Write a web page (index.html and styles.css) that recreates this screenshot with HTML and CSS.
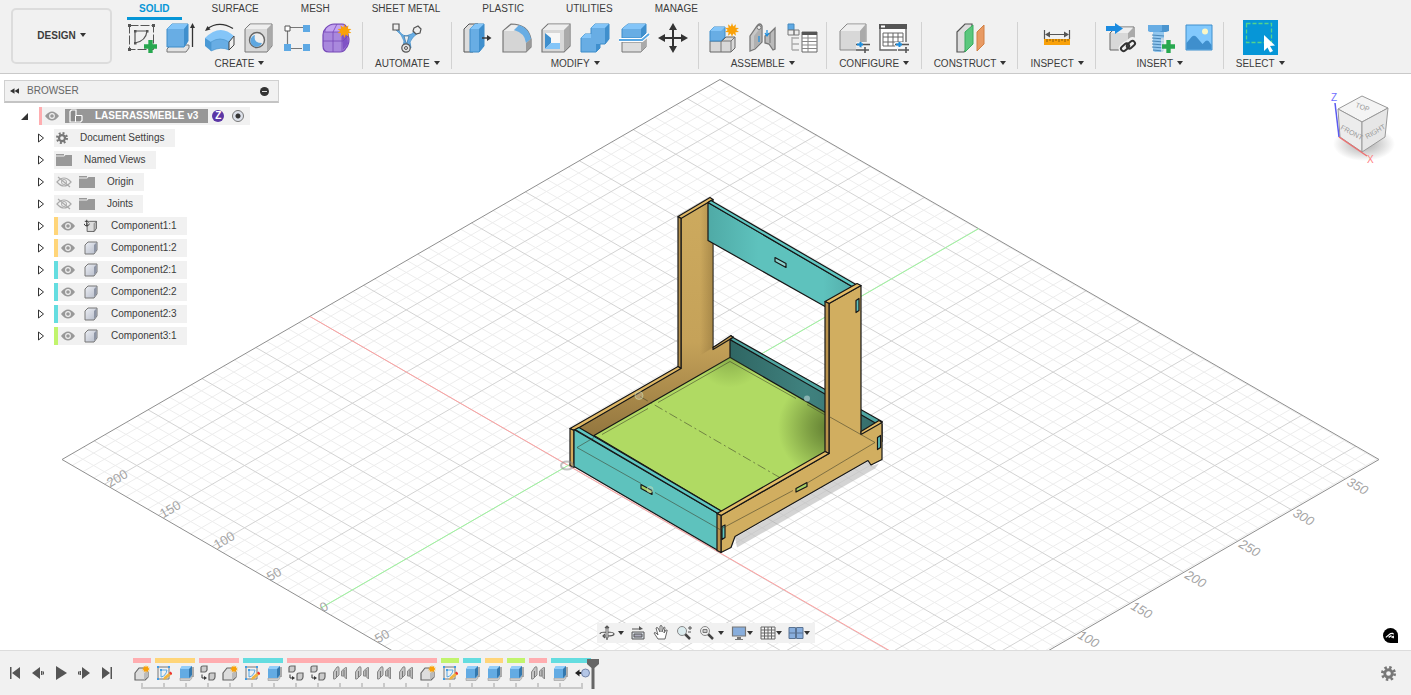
FILE: index.html
```html
<!DOCTYPE html>
<html lang="en">
<head>
<meta charset="utf-8">
<title>LASERASSMEBLE v3</title>
<link rel="stylesheet" href="styles.css">
</head>
<body>
<svg class="defs" aria-hidden="true">
  <defs>
    <linearGradient id="gTan" x1="0" y1="0" x2="0" y2="1"><stop offset="0" stop-color="#cdaa5e"/><stop offset=".6" stop-color="#c5a259"/><stop offset="1" stop-color="#92753e"/></linearGradient>
    <linearGradient id="gPost" x1="0" y1="0" x2="1" y2="0"><stop offset=".6" stop-color="#8a6e38" stop-opacity="0"/><stop offset="1" stop-color="#8a6e38" stop-opacity=".5"/></linearGradient>
    <linearGradient id="gBeam" x1="0" y1="0" x2="1" y2="0"><stop offset="0" stop-color="#4faaa6"/><stop offset=".35" stop-color="#5ec2bd"/><stop offset=".8" stop-color="#5ec2bd"/><stop offset="1" stop-color="#54aeab"/></linearGradient>
    <linearGradient id="gBack" x1="0" y1="0" x2="1" y2="0"><stop offset="0" stop-color="#2f6663"/><stop offset=".5" stop-color="#40827f"/><stop offset="1" stop-color="#356c69"/></linearGradient>
    <radialGradient id="gShade" gradientUnits="userSpaceOnUse" cx="830" cy="428" r="52"><stop offset="0" stop-color="#4c6524" stop-opacity=".8"/><stop offset=".4" stop-color="#4c6524" stop-opacity=".5"/><stop offset="1" stop-color="#4c6524" stop-opacity="0"/></radialGradient>
    <radialGradient id="gCorner" gradientUnits="userSpaceOnUse" cx="730" cy="352" r="36"><stop offset="0" stop-color="#5f8030" stop-opacity=".55"/><stop offset="1" stop-color="#5f8030" stop-opacity="0"/></radialGradient>
    <radialGradient id="gCubeShade"><stop offset=".3" stop-color="#777" stop-opacity=".45"/><stop offset="1" stop-color="#777" stop-opacity="0"/></radialGradient>
    <linearGradient id="gSmall" x1="0" y1="0" x2="1" y2="1"><stop offset="0" stop-color="#eef0f5"/><stop offset="1" stop-color="#b4bac8"/></linearGradient>
  </defs>
  <symbol id="plus" viewBox="0 0 12 12"><path d="M4 0h4v4h4v4H8v4H4V8H0V4h4z" fill="#27a84f"/></symbol>
  <symbol id="spark" viewBox="0 0 14 14"><path d="M7 0l1.200 3.600L11 1.300l-.6 3.400L14 5l-2.800 2 2.800 2-3.600.3.600 3.400-2.800-2.300L7 14l-1.200-3.600L3 12.700l.6-3.400L0 9l2.800-2L0 5l3.600-.3L3 1.300l2.800 2.300z" fill="#f9a109"/></symbol>

  <symbol id="sketch" viewBox="0 0 30 30"><path d="M2.500 2.500h24v24h-24z" fill="none" stroke="#555" stroke-dasharray="9 2"/><g fill="#555"><path d="M1 1h3v3H1zM25 1h3v3h-3zM1 25h3v3H1zM7 7h2.500v2.500H7zM19 7h2.500v2.500H19zM7 19h2.500v2.500H7z"/></g><path d="M8 8h12q-1 10-12 12z" fill="none" stroke="#555" stroke-width="1.200"/><use href="#plus" x="17" y="17" width="13" height="13"/></symbol>
  <symbol id="extrude" viewBox="0 0 30 30"><path d="M1 26l4-4h18v3l-3 4H1z" fill="#e3e3e3" stroke="#777"/><path d="M1 6l5-5h16v17l-4 6H1z" fill="#68ade4" stroke="#3d8cc9"/><path d="M1 6l5-5h16l-4 5z" fill="#84c5f8"/><path d="M18 6l4-5v17l-4 6z" fill="#3f8fcd"/><path d="M26.500 4v20" stroke="#333" stroke-width="1.300"/><path d="M24 5l2.500-5L29 5z" fill="#333"/></symbol>
  <symbol id="revolve" viewBox="0 0 30 30"><path d="M2 6q12-9 26-.5" fill="none" stroke="#333" stroke-width="1.300"/><path d="M0 8l2.500-5 3 3.500z" fill="#333"/><path d="M0 15q15-15 29-2l-5 7q-8-6-18 3z" fill="#84c5f8"/><path d="M0 15l6 4v9l-6-5z" fill="#4a99d5"/><path d="M6 19q9-6 18 0v8q-8-4-18 1z" fill="#68ade4" stroke="#4c97cf" stroke-width=".7"/><path d="M24 19l5-6v9l-5 5z" fill="#eee" stroke="#444"/></symbol>
  <symbol id="hole" viewBox="0 0 30 30"><path d="M1 6l5-5h22v22l-5 6H1z" fill="#d8d8d8" stroke="#777"/><path d="M1.500 6l5-4.500h21L23 6z" fill="#eee"/><path d="M23 6l4.500-4.500V23L23 28.500z" fill="#aaa"/><circle cx="13" cy="17" r="7.500" fill="#eee" stroke="#666" stroke-width="1.400"/><path d="M11 12a6 6 0 1 0 7 8q-9 0-7-8z" fill="#5ea7e0"/></symbol>
  <symbol id="pattern" viewBox="0 0 30 30"><path d="M7 4.500h13M4.500 8v13M8 25.500h11" stroke="#777" stroke-width="1.200"/><path d="M2 3h5v5H2z" fill="#fff" stroke="#555"/><path d="M20 2h7v7h-7zM1 21h7v7H1zM20 21h7v7h-7z" fill="#5ea9e4"/></symbol>
  <symbol id="form" viewBox="0 0 30 30"><path d="M1 12q0-4 3-7 4-4 8-4h8q4 0 5 5l2 10q0 6-3 9-2 4-6 4H7q-6 0-6-6z" fill="#a988dd" stroke="#7648b8" stroke-width="1.200"/><path d="M4 6q3-4 8-4h8q2 0 3 3l-4 4H4z" fill="#c4a4f0"/><path d="M20 9l5-4 1 16-5 6z" fill="#8052c6"/><path d="M1 18h20l5-5M11 29V9l4-8M2 9h18v19M20 9l5-5" fill="none" stroke="#7648b8" stroke-width=".8"/><use href="#spark" x="15.500" y="1" width="14" height="14"/></symbol>

  <symbol id="automate" viewBox="0 0 30 30"><path d="M6 5q2 7 8 8 6-1 10-6l2 3q-6 4-8 9l1 6h-8l1-7q-2-7-8-11z" fill="#68ade4" stroke="#3d8cc9" stroke-width=".8"/><path d="M12 13h5l-2 7h-1z" fill="#eee" stroke="#3d77a5" stroke-width=".8"/><path d="M1 1h6v6H1zM22 5l4-2 3 3-1 4-4 1-3-3z" fill="#eee" stroke="#555" stroke-width="1.200"/><circle cx="14" cy="25" r="4.200" fill="#e5e5e5" stroke="#555" stroke-width="1.200"/><circle cx="14" cy="25" r="1.500" fill="none" stroke="#555"/></symbol>

  <symbol id="presspull" viewBox="0 0 30 30"><path d="M1 6l5-5h9v22l-5 6H1z" fill="#ddd" stroke="#555"/><path d="M7 6l5-5h9v22l-5 6H7z" fill="#68ade4" stroke="#3d8cc9"/><path d="M7 6l5-5h9l-5 5z" fill="#84c5f8"/><path d="M16 6l5-5v22l-5 6z" fill="#3f8fcd"/><path d="M19 15h6" stroke="#333" stroke-width="1.400"/><path d="M24 12l4.500 3-4.500 3z" fill="#333"/></symbol>
  <symbol id="fillet" viewBox="0 0 30 30"><path d="M1 8l8-7q17 0 20 15v8l-5 5H1z" fill="#d5d5d5" stroke="#777" stroke-width="1.200"/><path d="M1.500 8l8-6q5 0 7 1l-5 5z" fill="#eee"/><path d="M12 7l5-5q10 3 12 14l-5 4Q23 10 12 7z" fill="#68ade4"/><path d="M24 20l5-4v8l-5 5z" fill="#999"/></symbol>
  <symbol id="shell" viewBox="0 0 30 30"><path d="M1 7l6-6h22v22l-6 6H1z" fill="#d8d8d8" stroke="#777" stroke-width="1.200"/><path d="M1.500 7l6-5.500h21L23 7z" fill="#eee"/><path d="M23 7l5.500-5.500V23L23 28.500z" fill="#aaa"/><path d="M4 10h15v16H4z" fill="#f7f7f7"/><path d="M4 10l6 5v5l-6 6z" fill="#3f8fcd"/><path d="M4 26l6-6h9v6z" fill="#84c5f8"/></symbol>
  <symbol id="combine" viewBox="0 0 30 30"><path d="M1 15l4-4h6V5l4-4h14v15l-4 5h-5v4l-4 4H1z" fill="#68ade4" stroke="#3d8cc9"/><path d="M11 5l4-4h14l-4 4zM1 15l4-4h6v4z" fill="#84c5f8"/><path d="M25 5l4-4v15l-4 5zM16 21h4v4l-4 4z" fill="#3f8fcd"/></symbol>
  <symbol id="split" viewBox="0 0 30 30"><path d="M3 19h20l4-4v9l-5 5H3z" fill="#ddd" stroke="#777"/><path d="M22 19l5-4v9l-5 5z" fill="#aaa"/><path d="M3 6l6-5h18v9l-5 5H3z" fill="#68ade4" stroke="#3d8cc9"/><path d="M3 6l6-5h18l-5 5z" fill="#84c5f8"/><path d="M22 6l5-5v9l-5 5z" fill="#3f8fcd"/><path d="M0 17h23l7-6" fill="none" stroke="#fff" stroke-width="4"/><path d="M0 17h23l7-6" fill="none" stroke="#58a7e3" stroke-width="1.800"/></symbol>
  <symbol id="move" viewBox="0 0 30 30"><path d="M15 4v22M4 15h22" stroke="#333" stroke-width="2"/><path d="M15 0l4 7h-8zM15 30l4-7h-8zM0 15l7-4v8zM30 15l-7-4v8z" fill="#333"/></symbol>

  <symbol id="component" viewBox="0 0 30 30"><path d="M1 18h12l4-4h9v11l-4 4H1z" fill="#d8d8d8" stroke="#666"/><path d="M12 18v11M12 18h10l4-4M22 18v11" fill="none" stroke="#777"/><path d="M1 8l4-4h11v10l-4 4H1z" fill="#68ade4" stroke="#3d8cc9"/><path d="M1 8l4-4h11l-4 4z" fill="#84c5f8"/><use href="#spark" x="16" y="0" width="14" height="14"/></symbol>
  <symbol id="joint" viewBox="0 0 30 30"><path d="M2 13L9 3q3-4 5 0v16L7 26l-5 2z" fill="#c8c8c8" stroke="#777" stroke-width="1.300"/><path d="M6 13l7-9v15l-7 7z" fill="#b0b0b0"/><circle cx="11" cy="4.500" r="2" fill="#eee" stroke="#777"/><path d="M17 13l5-3 5-5v21l-2 1-4-6-4-1z" fill="#bbb" stroke="#777" stroke-width="1.300"/><path d="M22 10v10" stroke="#777"/><path d="M11 13v6M19 7v6M17 10l2 3 2-3" stroke="#1c8ede" fill="none" stroke-width="1.200"/></symbol>
  <symbol id="bom" viewBox="0 0 30 30"><path d="M1 1h6v6H1z" fill="#5ea9e4" stroke="#4689bd"/><path d="M1 7h6v5H1zM7 7h5v5H7z" fill="#eee" stroke="#777"/><path d="M5 14v13M5 15h7M5 21h7M5 27h7" fill="none" stroke="#aaa" stroke-width="1.300"/><path d="M15 9h15v20H15z" fill="#fff" stroke="#666"/><path d="M15 9h15v3H15z" fill="#555"/><path d="M15 15h15M15 18.500h15M15 22h15M15 25.500h15M21 12v17" stroke="#888"/></symbol>

  <symbol id="params" viewBox="0 0 32 30"><path d="M1 8l7-7h19v18l-7 8H1z" fill="#d8d8d8" stroke="#888"/><path d="M1.500 8l7-6.500h18L21 8z" fill="#eee"/><path d="M21 8l5.500-6.500V19L21 26z" fill="#aaa"/><path d="M17 21.500h14M17 27h14" stroke="#f1f1f1" stroke-width="5"/><path d="M17 21.500h14M17 27h13M26 24v6" stroke="#555" stroke-width="1.600"/><path d="M18 21.500h6M21.500 19v5" stroke="#1c8ede" stroke-width="2"/></symbol>
  <symbol id="table" viewBox="0 0 32 30"><path d="M2 2h26v25H2z" fill="#fff" stroke="#666" stroke-width="1.400"/><path d="M1 1h28v5H1z" fill="#555"/><path d="M3 2.500h4v2H3z" fill="#fff"/><path d="M5 10h20v13H5zM5 14h20M5 19h20M10 10v13M15 10v13M20 10v13" fill="none" stroke="#666"/><path d="M17 21.500h14M19 27h12" stroke="#f1f1f1" stroke-width="5"/><path d="M17 21.500h14M20 27h11M28 24v6" stroke="#555" stroke-width="1.600"/><path d="M18 21.500h6M21.500 19v5" stroke="#1c8ede" stroke-width="2"/></symbol>
  <symbol id="construct" viewBox="0 0 30 30"><path d="M2 9l8-8h7v20l-8 8H2z" fill="#ddd" stroke="#555" stroke-width="1.200"/><path d="M10 9l8-7v19l-8 8z" fill="#5bc77d" stroke="#38ac5e"/><path d="M22 9l7-7v19l-7 7z" fill="#e89a63" stroke="#d17f43"/></symbol>
  <symbol id="measure" viewBox="0 0 30 30"><path d="M2.500 7v9M27.500 7v9M5 11.500h20" stroke="#555" stroke-width="1.200"/><path d="M3 11.500l5-3v6zM27 11.500l-5-3v6z" fill="#555"/><path d="M2 16h26v6H2z" fill="#f9a109"/><path d="M5 16v3M8 16v2M11 16v3M14 16v2M17 16v3M20 16v2M23 16v3M26 16v2" stroke="#8b5c0d"/></symbol>
  <symbol id="derive" viewBox="0 0 30 30"><path d="M4 10l6-6h18v17l-6 6H4z" fill="#d8d8d8" stroke="#666"/><path d="M22 10l6-6v17l-6 6z" fill="#aaa"/><path d="M5 10l6-5.500h16L22 10z" fill="#eee"/><path d="M0 3h9V0l8 5.500L9 11V8H0z" fill="#1b8be0"/><g fill="none" stroke="#f1f1f1" stroke-width="5"><rect x="15" y="22" width="9" height="5" rx="2.500" transform="rotate(-40 19 25)"/><rect x="21" y="18" width="9" height="5" rx="2.500" transform="rotate(-40 25 21)"/></g><g fill="none" stroke="#333" stroke-width="2"><rect x="15" y="22" width="9" height="5" rx="2.500" transform="rotate(-40 19 25)"/><rect x="20" y="19" width="9" height="5" rx="2.500" transform="rotate(-40 25 21)"/></g></symbol>
  <symbol id="bolt" viewBox="0 0 30 30"><path d="M3 2h21v6l-3 1H6L3 8z" fill="#4b95cf"/><path d="M3 2h14v6l-3 1H6L3 8z" fill="#68ade4"/><path d="M8 9h11v19l-2 1H10l-2-1z" fill="#93c7ee"/><path d="M7 12l12 1M7 15l12 1M7 18l12 1M7 21l12 1M7 24l12 1M8 27l10 1" stroke="#4b88b8" stroke-width="1.200"/><path d="M16 15h8v15h-8z" fill="#f1f1f1" opacity=".6"/><use href="#plus" x="17" y="17" width="13" height="13"/></symbol>
  <symbol id="image" viewBox="0 0 30 30"><path d="M2 2h26v25H2z" fill="#82c9fd" stroke="#3f8fcd"/><circle cx="21" cy="8.500" r="3" fill="#fbf6c5"/><path d="M2.500 20l5-6q2.500-2.500 5 0l6 7 3-3q1.500-1 3 0l3 4v4.500h-25z" fill="#3f8fcd"/></symbol>

  <symbol id="eye" viewBox="0 0 14 10"><path d="M0 5q7-9 14 0-7 9-14 0z" fill="#999"/><circle cx="7" cy="5" r="2.900" fill="#f1f1f1"/><circle cx="7" cy="5" r="1.800" fill="#999"/></symbol>
  <symbol id="eyeoff" viewBox="0 0 16 12"><path d="M1 6q7-8 14 0-7 8-14 0z" fill="none" stroke="#aaa" stroke-width="1.200"/><circle cx="8" cy="6" r="2.500" fill="none" stroke="#aaa"/><path d="M2 1l12 10" stroke="#aaa" stroke-width="1.200"/></symbol>
  <symbol id="folder" viewBox="0 0 16 12"><path d="M0 0h8v1.500H0zM0 2.500h8L9.500 1H16v11H0z" fill="#999"/></symbol>
  <symbol id="gear" viewBox="0 0 16 16"><circle cx="8" cy="8" r="6.500" fill="none" stroke="currentColor" stroke-width="3" stroke-dasharray="2.550 2.550"/><circle cx="8" cy="8" r="4" fill="none" stroke="currentColor" stroke-width="3"/></symbol>
  <symbol id="body" viewBox="0 0 14 14"><path d="M1 4l3-3h9v8l-3 4H1z" fill="url(#gSmall)" stroke="#777" stroke-linejoin="round"/><path d="M10 4l2.500-2.500V9L10 12z" fill="#8e95a5"/></symbol>
  <symbol id="grounded" viewBox="0 0 18 18"><path d="M4 6l3-3h9v9l-3 4H4z" fill="#ddd" stroke="#444"/><path d="M13 6l3-3v9l-3 4z" fill="#bbb" stroke="#555" stroke-width=".7"/><path d="M3.500 1v8M1 3h5M0 6q1 3 3.500 3T7 6" fill="none" stroke="#333" stroke-width="1.200"/></symbol>
  <symbol id="assembly" viewBox="0 0 16 14"><path d="M2 2.500L3.500 1H8v5.500h5.500L14 7v4.500L12.500 13H2z" fill="#8a8a8a" stroke="#fff" stroke-width="1.200"/><path d="M7.500 7v6" stroke="#fff"/></symbol>

  <symbol id="t-comp" viewBox="0 0 16 16"><path d="M1 8l4-5h6l3 4v5l-3 3H1z" fill="#ddd" stroke="#666" stroke-width="1.200" stroke-linejoin="round"/><path d="M10 8l4-2v6l-4 3z" fill="#bbb"/><use href="#spark" x="8" y="0" width="8" height="8"/></symbol>
  <symbol id="t-sketch" viewBox="0 0 16 16"><path d="M2 2h11v12H2z" fill="none" stroke="#777"/><path d="M5 5h6q-1 6-6 7z" fill="none" stroke="#58a7e3"/><path d="M1 1h2v2H1zM12 1h2v2h-2zM1 13h2v2H1zM4 4h2v2H4z" fill="#429de5"/><path d="M7 15l1-3 6-5 2 2-6 5z" fill="#efb441"/><path d="M13 8l1.500-1.500 2 2L15 10z" fill="#e33"/></symbol>
  <symbol id="t-extrude" viewBox="0 0 16 16"><path d="M2 13h10l2-2v2l-2 2.500H2z" fill="#ccc" stroke="#999" stroke-width=".6"/><path d="M2 4l2-3h10v9l-2 3H2z" fill="#63abe3"/><path d="M2 4l2-3h10l-2 3z" fill="#92cefa"/><path d="M11 4l3-3v9l-3 3z" fill="#3478ae"/><path d="M15 2v10" stroke="#666"/></symbol>
  <symbol id="t-built" viewBox="0 0 16 16"><path d="M1 2.500Q1 1 3 1h4v4Q6 7 5 7H1zM9 10q0-2 2-2h4v4q0 2-2 3H9z" fill="#ccc" stroke="#666" stroke-width="1.200"/><path d="M2 9.500V13h3" fill="none" stroke="#333"/><path d="M4 11l3 2-3 2z" fill="#333"/></symbol>
  <symbol id="t-joint" viewBox="0 0 16 16"><path d="M1.500 7L5 2q2-1 2 1v7l-4 4H1.500z" fill="#c4c4c4" stroke="#888"/><path d="M9.500 6l4-3.500h1V14l-3-3h-2z" fill="#bbb" stroke="#888"/><path d="M4.500 6v6M12 5v6" stroke="#777"/></symbol>
  <symbol id="t-capture" viewBox="0 0 16 16"><path d="M4 8h5" stroke="#222" stroke-width="2"/><path d="M1 8l4.500-3.500v7z" fill="#222"/><circle cx="11.500" cy="8" r="4" fill="#b4c6e6" stroke="#7585a8"/></symbol>
</svg>

<div class="app">
  <header class="toolbar">
    <button class="workspace">DESIGN<i class="caret"></i></button>
    <div class="ribbon">
      <nav class="tabs">
        <button class="tab active">SOLID</button><button class="tab">SURFACE</button><button class="tab">MESH</button><button class="tab">SHEET METAL</button><button class="tab">PLASTIC</button><button class="tab">UTILITIES</button><button class="tab">MANAGE</button>
      </nav>
      <div class="groups">
        <section class="group wide">
          <div class="tools"><button aria-label="Create sketch"><svg><use href="#sketch"/></svg></button><button aria-label="Extrude"><svg><use href="#extrude"/></svg></button><button aria-label="Revolve"><svg><use href="#revolve"/></svg></button><button aria-label="Hole"><svg><use href="#hole"/></svg></button><button aria-label="Pattern"><svg><use href="#pattern"/></svg></button><button aria-label="Create form"><svg><use href="#form"/></svg></button></div>
          <button class="menu">CREATE<i class="caret"></i></button>
        </section>
        <section class="group">
          <div class="tools"><button aria-label="Automated modeling"><svg><use href="#automate"/></svg></button></div>
          <button class="menu">AUTOMATE<i class="caret"></i></button>
        </section>
        <section class="group wide">
          <div class="tools"><button aria-label="Press pull"><svg><use href="#presspull"/></svg></button><button aria-label="Fillet"><svg><use href="#fillet"/></svg></button><button aria-label="Shell"><svg><use href="#shell"/></svg></button><button aria-label="Combine"><svg><use href="#combine"/></svg></button><button aria-label="Split body"><svg><use href="#split"/></svg></button><button aria-label="Move"><svg><use href="#move"/></svg></button></div>
          <button class="menu">MODIFY<i class="caret"></i></button>
        </section>
        <section class="group mid">
          <div class="tools"><button aria-label="New component"><svg><use href="#component"/></svg></button><button aria-label="Joint"><svg><use href="#joint"/></svg></button><button aria-label="Bill of materials"><svg><use href="#bom"/></svg></button></div>
          <button class="menu">ASSEMBLE<i class="caret"></i></button>
        </section>
        <section class="group">
          <div class="tools"><button aria-label="Change parameters"><svg><use href="#params"/></svg></button><button aria-label="Configuration table"><svg><use href="#table"/></svg></button></div>
          <button class="menu">CONFIGURE<i class="caret"></i></button>
        </section>
        <section class="group">
          <div class="tools"><button aria-label="Offset plane"><svg><use href="#construct"/></svg></button></div>
          <button class="menu">CONSTRUCT<i class="caret"></i></button>
        </section>
        <section class="group">
          <div class="tools"><button aria-label="Measure"><svg><use href="#measure"/></svg></button></div>
          <button class="menu">INSPECT<i class="caret"></i></button>
        </section>
        <section class="group mid">
          <div class="tools"><button aria-label="Insert derive"><svg><use href="#derive"/></svg></button><button aria-label="Insert fastener"><svg><use href="#bolt"/></svg></button><button aria-label="Insert canvas"><svg><use href="#image"/></svg></button></div>
          <button class="menu">INSERT<i class="caret"></i></button>
        </section>
        <section class="group">
          <div class="tools"><button class="selected" aria-label="Select"><svg viewBox="0 0 35 35"><path d="M3.500 3.500h25v19h-25z" fill="none" stroke="#54d38c" stroke-width="1.300" stroke-dasharray="4 2"/><path d="M21 15l11 10.500-5 .5 3 5-3 1.500-2.500-5L21 31z" fill="#fff"/></svg></button></div>
          <button class="menu">SELECT<i class="caret"></i></button>
        </section>
      </div>
    </div>
  </header>

  <main class="viewport">
    <svg class="scene" viewBox="0 74 1411 577" preserveAspectRatio="xMidYMid slice" role="img" aria-label="Laser cut assembly on the ground grid">
      <path id="minor" class="minor"/>
      <path id="major" class="major"/>
      <path class="border" d="M62 460L720 80 1379 460 720 841z"/>
      <path class="axis-x" d="M310 317L898 656"/>
      <path class="axis-y" d="M320 609L979 229"/>
      <g class="scale">
        <text transform="translate(110 488) rotate(-30)">200</text>
        <text transform="translate(163 519) rotate(-30)">150</text>
        <text transform="translate(217 550) rotate(-30)">100</text>
        <text transform="translate(270 582) rotate(-30)">50</text>
        <text transform="translate(323 613) rotate(-30)">0</text>
        <text transform="translate(378 644) rotate(-30)">50</text>
      </g>
      <g class="scale lean">
        <text transform="translate(1346 485) rotate(30)">350</text>
        <text transform="translate(1292 516) rotate(30)">300</text>
        <text transform="translate(1238 547) rotate(30)">250</text>
        <text transform="translate(1184 578) rotate(30)">200</text>
        <text transform="translate(1130 609) rotate(30)">150</text>
        <text transform="translate(1077 638) rotate(30)">100</text>
      </g>

      <path d="M735 538L868 462l5 4 6-2-4 5-138 79z" fill="#aaa" opacity=".5"/>
      <g class="model">
        <path d="M681 218L713 200V348L733 337 731 360 594 438 575 430 681 368z" fill="url(#gTan)"/>
        <path class="bare" d="M681 218L713 200V348L681 368z" fill="url(#gPost)"/>
        <path d="M678 217L710 198 713 200 681 219z" fill="#e0b865"/>
        <path d="M678 217L681 219V369L678 367z" fill="#b7924d"/>
        <path d="M713 348L731 336 733 338 713 350z" fill="#c39d54"/>
        <path d="M570 429L678 367 681 369 574 431z" fill="#e0b865"/>
        <path d="M570 429L574 431V468L570 466z" fill="#d2ab5c"/>
        <path d="M730 340L882 425V442L861 436 730 360z" fill="url(#gBack)"/>
        <path d="M730 340L733 338 882 422 878 425z" fill="#4fa6a2"/>
        <path d="M594 436L730 358 860 433 722 512z" fill="#b0da63"/>
        <path class="bare" d="M594 436L730 358 860 433 722 512z" fill="url(#gShade)"/>
        <path class="bare" d="M594 436L730 358 860 433 722 512z" fill="url(#gCorner)"/>
        <path class="hidden" d="M602 435L648 409M658 403L730 362 796 399M807 405L826 416"/>
        <path class="hidden" d="M640 397L797 488" stroke-dasharray="9 3 2 3"/>
        <circle cx="639" cy="396" r="4" class="pin"/>
        <path d="M708 203L852 287 825 307 708 241z" fill="url(#gBeam)"/>
        <path d="M708 203L711 201 856 285 852 287z" fill="#5fc7c2"/>
        <path d="M775 258L786 264V268L775 262z" fill="#8cd3ce"/>
        <path d="M574 430L718 514V551L574 467z" fill="#5ec2bd"/>
        <path d="M575 430L579 428 722 512 718 514z" fill="#5fc7c2"/>
        <path d="M641 485L652 491V495L641 489z" fill="#a6cf64"/>
        <path d="M829 304L861 286V434L882 422V460L871 465.500 868 461 735 537 731 548 721 553V516L829 454z" fill="#d1ae60"/>
        <path d="M825 302L857 284 861 286 829 304z" fill="#e5bc67"/>
        <path d="M825 302L829 304V454L825 452z" fill="#ba934d"/>
        <path d="M717 514L825 452 829 454 721 516z" fill="#e5bc67"/>
        <path d="M717 514L721 516V553L717 551z" fill="#ba934d"/>
        <path d="M861 432L879 421 882 423 861 435z" fill="#e5bc67"/>
        <path d="M856 301L859 299V311L856 313zM877.500 438L880.500 436V448L877.500 450zM722 527L725 525.500V538L722 540z" fill="#5ec2bd"/>
        <path d="M796 489L807 483V487L796 492.500z" fill="#a6cf64"/>
        <path class="hidden" d="M594 438L577 448 641 484M655 493L720 530 793 491M808 483L875 443 829 417"/>
        <circle cx="650" cy="490" r="3" class="pin"/>
        <circle cx="807" cy="399" r="3" class="dot"/>
        <ellipse cx="567" cy="466" rx="6" ry="4" class="origin"/>
      </g>
    </svg>

    <aside class="browser">
      <div class="browser-head"><button class="collapse" aria-label="Collapse"><svg viewBox="0 0 10 6"><path d="M5 0v6L0 3zM10 0v6L5 3z" fill="#333"/></svg></button><span>BROWSER</span><button class="minus" aria-label="Minimize"></button></div>
      <ul class="tree">
        <li class="root"><button class="twist" aria-label="Collapse tree"><svg viewBox="0 0 8 8"><path d="M8 0v8H0z" fill="#333"/></svg></button>
          <div class="row pink"><svg class="eye"><use href="#eye"/></svg><span class="name"><svg class="asm"><use href="#assembly"/></svg>LASERASSMEBLE v3</span><span class="badge">Z</span><input type="radio" checked aria-label="Activate LASERASSMEBLE v3"></div></li>
        <li><button class="twist" aria-label="Expand"><svg viewBox="0 0 8 10"><path d="M1.500 1v8L6.500 5z" fill="#fff" stroke="#333"/></svg></button><div class="row"><svg class="gear"><use href="#gear"/></svg><span class="gap-s">Document Settings</span></div></li>
        <li><button class="twist" aria-label="Expand"><svg viewBox="0 0 8 10"><path d="M1.500 1v8L6.500 5z" fill="#fff" stroke="#333"/></svg></button><div class="row"><svg class="folder"><use href="#folder"/></svg><span class="gap-s">Named Views</span></div></li>
        <li><button class="twist" aria-label="Expand"><svg viewBox="0 0 8 10"><path d="M1.500 1v8L6.500 5z" fill="#fff" stroke="#333"/></svg></button><div class="row"><svg class="off"><use href="#eyeoff"/></svg><svg class="folder"><use href="#folder"/></svg><span class="gap-s">Origin</span></div></li>
        <li><button class="twist" aria-label="Expand"><svg viewBox="0 0 8 10"><path d="M1.500 1v8L6.500 5z" fill="#fff" stroke="#333"/></svg></button><div class="row"><svg class="off"><use href="#eyeoff"/></svg><svg class="folder"><use href="#folder"/></svg><span class="gap-s">Joints</span></div></li>
        <li><button class="twist" aria-label="Expand"><svg viewBox="0 0 8 10"><path d="M1.500 1v8L6.500 5z" fill="#fff" stroke="#333"/></svg></button><div class="row yellow"><svg class="eye"><use href="#eye"/></svg><svg class="part"><use href="#grounded"/></svg><span>Component1:1</span></div></li>
        <li><button class="twist" aria-label="Expand"><svg viewBox="0 0 8 10"><path d="M1.500 1v8L6.500 5z" fill="#fff" stroke="#333"/></svg></button><div class="row yellow"><svg class="eye"><use href="#eye"/></svg><svg class="part"><use href="#body"/></svg><span>Component1:2</span></div></li>
        <li><button class="twist" aria-label="Expand"><svg viewBox="0 0 8 10"><path d="M1.500 1v8L6.500 5z" fill="#fff" stroke="#333"/></svg></button><div class="row teal"><svg class="eye"><use href="#eye"/></svg><svg class="part"><use href="#body"/></svg><span>Component2:1</span></div></li>
        <li><button class="twist" aria-label="Expand"><svg viewBox="0 0 8 10"><path d="M1.500 1v8L6.500 5z" fill="#fff" stroke="#333"/></svg></button><div class="row teal"><svg class="eye"><use href="#eye"/></svg><svg class="part"><use href="#body"/></svg><span>Component2:2</span></div></li>
        <li><button class="twist" aria-label="Expand"><svg viewBox="0 0 8 10"><path d="M1.500 1v8L6.500 5z" fill="#fff" stroke="#333"/></svg></button><div class="row teal"><svg class="eye"><use href="#eye"/></svg><svg class="part"><use href="#body"/></svg><span>Component2:3</span></div></li>
        <li><button class="twist" aria-label="Expand"><svg viewBox="0 0 8 10"><path d="M1.500 1v8L6.500 5z" fill="#fff" stroke="#333"/></svg></button><div class="row lime"><svg class="eye"><use href="#eye"/></svg><svg class="part"><use href="#body"/></svg><span>Component3:1</span></div></li>
      </ul>
    </aside>

    <svg class="cube" viewBox="1320 86 80 84" role="img" aria-label="View cube">
      <ellipse cx="1364" cy="144" rx="31" ry="17" fill="url(#gCubeShade)"/>
      <g stroke="#999" stroke-linejoin="round"><path d="M1338 109L1362 96 1388 108 1362 122z" fill="#f4f4f4"/><path d="M1338 109L1362 122V152L1340 137z" fill="#ececec"/><path d="M1362 122L1388 108 1385 137 1362 152z" fill="#e6e6e6"/></g>
      <path d="M1335 103L1339 137" stroke="#5a5af0" stroke-width="1.500"/><path d="M1339 137L1367 156" stroke="#ee7070" stroke-width="1.500"/>
      <text x="1331" y="101" fill="#7070ff" class="axis">Z</text><text x="1367" y="163" fill="#ff8080" class="axis">X</text>
      <text class="face" transform="translate(1355 107) rotate(20)">TOP</text><text class="face" transform="translate(1340 129) rotate(28)">FRONT</text><text class="face" transform="translate(1367 139) rotate(-30)">RIGHT</text>
    </svg>

    <div class="navbar">
      <button aria-label="Orbit"><svg viewBox="0 0 16 16"><path d="M8 1v14M6 3l2-2 2 2M1 9q0-2 7-2t7 2-7 2q-3 0-4 0M6 9l-2 2 2 2" fill="none" stroke="#555" stroke-width="1.200"/><path d="M7 3h2v10H7z" fill="#ddd" stroke="#555" stroke-width=".8"/></svg><i class="caret"></i></button>
      <button aria-label="Look at"><svg viewBox="0 0 16 16"><path d="M2 7h12v7H2z" fill="#d6dce4" stroke="#555"/><path d="M4 9h8v3H4zM2 4h9" stroke="#555" fill="#aab"/><path d="M9 1l4 3-4 1z" fill="#555"/></svg></button>
      <button aria-label="Pan"><svg viewBox="0 0 16 16"><path d="M5 14L1 8q0-1 2 0l2 2-2-7q1-1 2 0l2 4V1q1-1 2 0l0 6 2-5q1 0 1 1l-1 5 2-3q2 0 1 1l-2 8z" fill="#fff" stroke="#666" stroke-linejoin="round"/></svg></button>
      <button aria-label="Zoom"><svg viewBox="0 0 16 16"><path d="M9 9l5 5" stroke="#444" stroke-width="2.500"/><circle cx="6" cy="6" r="4.500" fill="#dcecef" stroke="#888"/><path d="M12 3h4M14 1v4M12 7h3" stroke="#555"/></svg></button>
      <button aria-label="Fit"><svg viewBox="0 0 16 16"><path d="M9 9l5 5" stroke="#444" stroke-width="2.500"/><circle cx="6" cy="6" r="4.500" fill="#eee" stroke="#888"/><path d="M4 4.500h4v3H4z" fill="#ccc" stroke="#777"/></svg><i class="caret"></i></button>
      <button aria-label="Display settings"><svg viewBox="0 0 16 16"><path d="M1.500 2h13v9h-13z" fill="#88aedd" stroke="#777" stroke-width="1.200"/><path d="M6 12h4v2h2v1H4v-1h2z" fill="#777"/></svg><i class="caret tight"></i></button>
      <button aria-label="Grid and snaps"><svg viewBox="0 0 16 16"><path d="M1 2h14v12H1zM1 5h14M1 8h14M1 11h14M4.500 2v12M8 2v12M11.500 2v12" fill="#f4f4f4" stroke="#666"/></svg><i class="caret tight"></i></button>
      <button aria-label="Viewports"><svg viewBox="0 0 16 16"><path d="M1 2.500h6.500v11H1zM8.500 2.500H15v11H8.500z" fill="#88aedd" stroke="#5a7392"/><path d="M1 8h14" stroke="#5a7392"/></svg><i class="caret tight"></i></button>
    </div>
    <button class="assistant" aria-label="Assistant"><svg viewBox="0 0 16 16"><path d="M8 0a8 8 0 0 1 8 8v8H8A8 8 0 0 1 8 0z" fill="#000"/><path d="M3 10l5-4q3-1 3 1M6 10l3-2M9 10l2-1v2" fill="none" stroke="#fff" stroke-width="1.300"/></svg></button>
  </main>

  <footer class="timeline">
    <div class="playback">
      <button aria-label="Go to start"><svg viewBox="0 0 12 12"><path d="M1 0h1.500v12H1zM11 0v12L3 6z"/></svg></button>
      <button aria-label="Step back"><svg viewBox="0 0 12 12"><path d="M8 0v12L0 6zM9 4h1.500v4H9zM11 4.500h1v3h-1z"/></svg></button>
      <button aria-label="Play"><svg viewBox="0 0 12 12"><path d="M1 -1l11 7-11 7z"/></svg></button>
      <button aria-label="Step forward"><svg viewBox="0 0 12 12"><path d="M4 0v12l8-6zM1.500 4H3v4H1.500zM0 4.500h1v3H0z"/></svg></button>
      <button aria-label="Go to end"><svg viewBox="0 0 12 12"><path d="M9.500 0H11v12H9.500zM1 0v12l8-6z"/></svg></button>
    </div>
    <div class="track">
      <ol class="features">
        <li class="pink"><button aria-label="Component"><svg><use href="#t-comp"/></svg></button></li>
        <li class="yellow"><button aria-label="Sketch"><svg><use href="#t-sketch"/></svg></button><button aria-label="Extrude"><svg><use href="#t-extrude"/></svg></button></li>
        <li class="pink"><button aria-label="As-built"><svg><use href="#t-built"/></svg></button><button aria-label="Component"><svg><use href="#t-comp"/></svg></button></li>
        <li class="teal"><button aria-label="Sketch"><svg><use href="#t-sketch"/></svg></button><button aria-label="Extrude"><svg><use href="#t-extrude"/></svg></button></li>
        <li class="pink"><button aria-label="As-built"><svg><use href="#t-built"/></svg></button><button aria-label="As-built"><svg><use href="#t-built"/></svg></button><button aria-label="Joint"><svg><use href="#t-joint"/></svg></button><button aria-label="Joint"><svg><use href="#t-joint"/></svg></button><button aria-label="Joint"><svg><use href="#t-joint"/></svg></button><button aria-label="Joint"><svg><use href="#t-joint"/></svg></button><button aria-label="Component"><svg><use href="#t-comp"/></svg></button></li>
        <li class="lime"><button aria-label="Sketch"><svg><use href="#t-sketch"/></svg></button></li>
        <li class="teal"><button aria-label="Extrude"><svg><use href="#t-extrude"/></svg></button></li>
        <li class="yellow"><button aria-label="Extrude"><svg><use href="#t-extrude"/></svg></button></li>
        <li class="lime"><button aria-label="Extrude"><svg><use href="#t-extrude"/></svg></button></li>
        <li class="pink"><button aria-label="Joint"><svg><use href="#t-joint"/></svg></button></li>
        <li class="teal"><button aria-label="Extrude"><svg><use href="#t-extrude"/></svg></button><button aria-label="Capture"><svg><use href="#t-capture"/></svg></button></li>
      </ol>
      <div class="ruler"></div>
      <svg class="marker" viewBox="0 0 12 30"><path d="M0 0h12v5L7.500 9v21h-3V9L0 5z" fill="#666"/></svg>
    </div>
    <button class="settings" aria-label="Timeline settings"><svg><use href="#gear"/></svg></button>
  </footer>
</div>
<script src="grid.js"></script>
</body>
</html>
```
FILE: styles.css
```css
* { box-sizing: border-box; }
body { margin: 0; font: 10px/14px "Liberation Sans", Arial, sans-serif; color: #3c3c3c; background: #fff; }
button { font: inherit; color: inherit; background: none; border: 0; padding: 0; margin: 0; }
svg { display: block; }
ul, ol { list-style: none; margin: 0; padding: 0; }
.defs { position: absolute; width: 0; height: 0; }
.app { display: flex; flex-direction: column; height: 100vh; min-height: 480px; }
.caret { display: inline-block; margin-left: 4px; vertical-align: 2px; border: 3px solid transparent; border-top: 4px solid #333; border-bottom: 0; }

.toolbar { display: flex; background: #f1f1f1; border-bottom: 1px solid #c9c9c9; padding-left: 11px; }
.workspace { width: 101px; height: 56px; margin-top: 8px; flex: none; border: 2px solid #dcdcdc; border-radius: 5px; font-weight: bold; }
.ribbon { flex: 1; }
.tabs { display: flex; gap: 18px; padding: 0 0 0 15px; }
.tab { padding: 2px 12px 1px; border-bottom: 3px solid transparent; }
.tab.active { color: #0696d7; font-weight: bold; border-color: #0696d7; }
.groups { display: flex; padding-left: 4px; }
.group { display: flex; flex-direction: column; align-items: center; padding: 0 12px; height: 53px; position: relative; }
.group:not(:last-child)::after { content: ""; position: absolute; right: 0; top: 2px; bottom: 4px; width: 1px; background: #d2d2d2; }
.group.wide { padding: 0 10px; }
.group.mid { padding: 0 9px; }
.tools { display: flex; align-items: center; justify-content: center; gap: 7px; height: 35px; }
.tools button { width: 32px; height: 30px; }
.tools svg { width: 32px; height: 30px; }
.tools .selected { width: 35px; height: 35px; background: #0696d7; }
.tools .selected svg { width: 35px; height: 35px; }
.menu { white-space: nowrap; padding-top: 2px; }

.viewport { position: relative; flex: 1; min-height: 0; overflow: hidden; }
.scene { width: 100%; height: 100%; }
.scene path { vector-effect: non-scaling-stroke; }
.minor { fill: none; stroke: #ededed; }
.major { fill: none; stroke: #d3d3d3; }
.border { fill: none; stroke: #8f8f8f; }
.axis-x { stroke: #ffa0a0; }
.axis-y { stroke: #9df79d; }
.scale { font-size: 13px; fill: #a4a4a4; }
.lean { font-style: italic; }
.model path { stroke: #161616; stroke-width: 1.200px; stroke-linejoin: round; }
.model .bare { stroke: none; }
.model .hidden { fill: none; stroke: #3c3c28; stroke-opacity: .55; stroke-width: 1px; }
.pin { fill: #fff; fill-opacity: .2; stroke: #c8d8a8; stroke-opacity: .6; }
.dot { fill: #a8c8c8; fill-opacity: .7; }
.origin { fill: none; stroke: #888; stroke-opacity: .5; stroke-width: 2px; }

.browser { position: absolute; left: 4px; top: 6px; width: 275px; }
.browser-head { display: flex; align-items: center; gap: 8px; height: 23px; padding: 0 9px 0 5px; background: #f1f1f1; border: 1px solid #d0d0d0; border-bottom: 2px solid #c4c4c4; color: #666; }
.collapse svg { width: 9px; height: 6px; }
.minus { margin-left: auto; width: 9px; height: 9px; border-radius: 50%; background: linear-gradient(#ddd, #ddd) center / 5px 1px no-repeat #333; }
.tree { padding-top: 2px; }
.tree li { display: flex; align-items: center; height: 22px; padding-left: 33px; }
.tree .root { padding-left: 17px; }
.twist { width: 8px; margin-right: 9px; }
.twist svg { width: 8px; height: 10px; }
.root .twist svg { width: 7px; height: 7px; }
.row { display: flex; align-items: center; height: 18px; padding: 0 10px 0 2px; background: #f1f1f1; }
.row.pink, .row.yellow, .row.teal, .row.lime { border-left: 4px solid; }
.row.pink { border-color: #ffadb0; }
.row.yellow { border-color: #ffd579; }
.row.teal { border-color: #64dde0; }
.row.lime { border-color: #c1f46c; }
.row .eye { width: 14px; height: 10px; margin: 0 9px 0 1px; }
.row .off { width: 16px; height: 12px; margin-right: 7px; }
.row .gear { width: 12px; height: 12px; color: #777; }
.row .folder { width: 16px; height: 12px; }
.row .part { width: 14px; height: 14px; margin-right: 13px; }
.gap-s { margin-left: 12px; }
.root .twist { margin-right: 10px; }
.root .row { border-left-width: 3px; padding-right: 6px; }
.root .eye { margin: 0 6px 0 1px; }
.name { display: flex; align-items: center; height: 14px; padding: 0 10px 0 3px; background: #979797; color: #fff; font-weight: bold; }
.asm { width: 16px; height: 14px; margin-right: 11px; }
.badge { width: 12px; height: 12px; margin: 0 8px 0 4px; border-radius: 50%; background: #5b36a5; color: #fff; font-weight: bold; line-height: 12px; text-align: center; }
.row input { appearance: none; width: 12px; height: 12px; margin: 0; border: 1px solid #777; border-radius: 50%; background: radial-gradient(circle, #333 0 2px, #dde1ea 3px); }

.cube { position: absolute; right: 11px; top: 12px; width: 80px; height: 84px; }
.cube .axis { font-size: 10px; }
.cube .face { font-size: 7px; fill: #999; }

.navbar { position: absolute; left: 50%; bottom: 7px; transform: translateX(-50%); display: flex; align-items: center; justify-content: space-between; width: 218px; height: 20px; padding: 0 4px 0 2px; background: #f1f1f1; }
.navbar button { display: flex; align-items: center; }
.navbar svg { width: 16px; height: 16px; }
.navbar .caret { margin-left: 3px; }
.navbar .tight { margin-left: 0; }
.assistant { position: absolute; right: 13px; bottom: 7px; }
.assistant svg { width: 15px; height: 15px; }

.timeline { display: flex; align-items: flex-start; height: 45px; flex: none; background: #f1f1f1; border-top: 1px solid #dcdcdc; padding: 0 15px 0 9px; }
.playback { display: flex; gap: 11px; padding-top: 16px; fill: #555; }
.playback svg { width: 12px; height: 12px; overflow: visible; }
.track { position: relative; margin: 7px auto 0 20px; }
.features { display: flex; gap: 4px; }
.features li { display: flex; gap: 4px; border-top: 5px solid; padding-top: 2px; }
.features .pink { border-color: #ffadb0; }
.features .yellow { border-color: #ffd579; }
.features .teal { border-color: #64dde0; }
.features .lime { border-color: #c1f46c; }
.features button { width: 18px; }
.features svg { width: 16px; height: 16px; margin: 0 auto; }
.features button::after { content: ""; display: block; width: 2px; height: 4px; margin: 2px auto 0; background: #c9c9c9; }
.ruler { height: 2px; margin: 0 8px; background: #c9c9c9; }
.marker { position: absolute; right: -8px; top: 1px; width: 12px; height: 30px; }
.settings { padding-top: 15px; color: #777; }
.settings svg { width: 15px; height: 15px; }
```
FILE: grid.js
```js
// Ground plane: one step is 50 mm, measured from the sketch origin.
const origin = [568, 466];
const stepX = 53.9;
const stepY = 31.13;
const sRange = [-4.79, 7.42];
const tRange = [-4.6, 7.62];

const point = (s, t) =>
  (origin[0] + (s + t) * stepX).toFixed(1) + ' ' + (origin[1] + (s - t) * stepY).toFixed(1);

function lines(step, skip) {
  let d = '';
  for (let i = Math.ceil(sRange[0] / step); i * step <= sRange[1]; i++) {
    if (!skip || i % skip) d += 'M' + point(i * step, tRange[0]) + 'L' + point(i * step, tRange[1]);
  }
  for (let i = Math.ceil(tRange[0] / step); i * step <= tRange[1]; i++) {
    if (!skip || i % skip) d += 'M' + point(sRange[0], i * step) + 'L' + point(sRange[1], i * step);
  }
  return d;
}

document.getElementById('minor').setAttribute('d', lines(0.2, 5));
document.getElementById('major').setAttribute('d', lines(1));
```
